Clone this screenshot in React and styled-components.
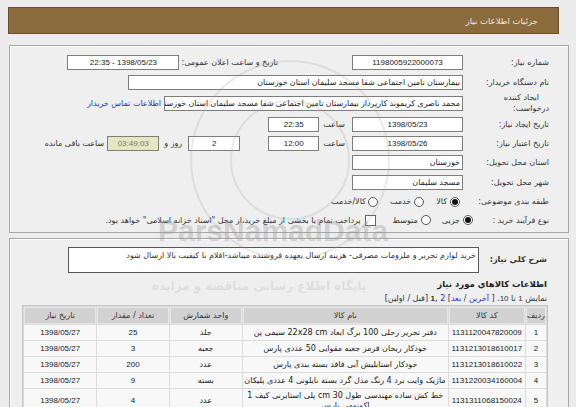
import React from "react";
import styled, { createGlobalStyle } from "styled-components";

const Global = createGlobalStyle`
  html, body { margin: 0; padding: 0; background: #ececec; }
  body { font-family: "Liberation Sans", "DejaVu Sans", sans-serif; font-size: 8px; color: #222; }
  * { box-sizing: border-box; }
`;

const Page = styled.div`
  direction: rtl;
  width: 576px;
  height: 407px;
  overflow: hidden;
  position: relative;
  padding-top: 7px;
`;

const HeaderBar = styled.div`
  margin: 0 17px 0 8px;
  height: 27px;
  background: #8b6b3e;
  border: 1px solid #6a5029;
  display: flex;
  align-items: center;
  padding-right: 20px;
  color: #f3ead8;
  font-family: "DejaVu Sans", sans-serif;
  font-size: 8.5px;
`;

const Panel = styled.div`
  margin: ${(p) => p.$top}px 7px 0 9px;
  border: 1px solid #a8a8a8;
  box-shadow: inset 1px 1px 0 #fff;
  background: #efefef;
  padding: ${(p) => p.$pad};
`;

const Row = styled.div`
  display: flex;
  align-items: center;
  height: ${(p) => p.$h || 20}px;
`;

const Label = styled.div`
  width: ${(p) => p.$w || 79}px;
  flex: none;
  font-family: "DejaVu Sans", sans-serif;
  font-size: 8px;
  color: #333;
  line-height: 11px;
  font-weight: ${(p) => (p.$bold ? "bold" : "normal")};
`;

const LabelLine = styled.div`
  padding-right: ${(p) => p.$pr || 0}px;
`;

const Text = styled.span`
  font-family: "DejaVu Sans", sans-serif;
  font-size: 8px;
  color: #333;
  margin-right: ${(p) => p.$mr || 0}px;
  white-space: nowrap;
`;

const Field = styled.div`
  flex: none;
  width: ${(p) => p.$w}px;
  height: 15px;
  margin-right: ${(p) => p.$mr || 0}px;
  background: ${(p) => (p.$yellow ? "#e6e6c2" : "#fff")};
  border: 1px solid #7d7d7d;
  color: ${(p) => (p.$yellow ? "#777" : "#222")};
  display: flex;
  align-items: center;
  justify-content: ${(p) => (p.$start ? "flex-start" : "center")};
  padding: 0 2px;
  font-family: "Liberation Sans", "DejaVu Sans", sans-serif;
  font-size: 8px;
  white-space: nowrap;
  overflow: hidden;
`;

const Link = styled.a`
  color: #2e2eb8;
  text-decoration: none;
  font-family: "DejaVu Sans", sans-serif;
  font-size: 8px;
  margin-right: ${(p) => p.$mr || 0}px;
  white-space: nowrap;
`;

const Radio = styled.span`
  width: 10px;
  height: 10px;
  border-radius: 50%;
  border: 1px solid #555;
  background: #fff;
  display: inline-flex;
  align-items: center;
  justify-content: center;
  flex: none;
  margin-right: ${(p) => p.$mr || 0}px;
  &::after {
    content: "";
    width: 6px;
    height: 6px;
    border-radius: 50%;
    background: ${(p) => (p.$on ? "#111" : "transparent")};
  }
`;

const Check = styled.span`
  width: 11px;
  height: 11px;
  border: 1px solid #666;
  background: #fff;
  flex: none;
  margin-right: ${(p) => p.$mr || 0}px;
`;

const DescBox = styled.div`
  width: 411px;
  height: 26px;
  margin-right: 2px;
  background: #fff;
  border: 1px solid #555;
  padding: 3px 2px;
  font-family: "DejaVu Sans", sans-serif;
  font-size: 8px;
  color: #333;
  white-space: nowrap;
  overflow: hidden;
`;

const SectionTitle = styled.div`
  font-family: "DejaVu Sans", sans-serif;
  font-weight: bold;
  font-size: 8.5px;
  color: #222;
  height: ${(p) => p.$h}px;
  display: flex;
  align-items: center;
`;

const Pager = styled.div`
  font-family: "DejaVu Sans", sans-serif;
  font-size: 8px;
  color: #333;
  height: 11px;
  line-height: 10px;
  white-space: pre;
`;

const Num = styled.span`
  font-family: "Liberation Sans", sans-serif;
  font-weight: ${(p) => (p.$bold ? "bold" : "normal")};
`;

const Table = styled.table`
  border-collapse: separate;
  border-spacing: 1px;
  background: #dcdcdc;
  border: 1px solid #c4c4c4;
  margin-right: -1px;
  width: 526px;
  table-layout: fixed;
`;

const Th = styled.th`
  background: #d2d2d2;
  height: 17px;
  font-weight: normal;
  font-family: "DejaVu Sans", sans-serif;
  font-size: 8px;
  color: #333;
  text-align: center;
  padding: 0;
  border: 1px solid #e6e6e6;
`;

const Td = styled.td`
  background: #f8f8f8;
  height: ${(p) => p.$h || 15}px;
  font-family: ${(p) =>
    p.$fa ? '"DejaVu Sans", sans-serif' : '"Liberation Sans", "DejaVu Sans", sans-serif'};
  font-size: 8px;
  color: #222;
  text-align: center;
  padding: 0 2px;
  white-space: nowrap;
  overflow: hidden;
  line-height: 10px;
`;

const Watermark = styled.div`
  position: absolute;
  inset: 0;
  pointer-events: none;
`;

const WmText = styled.div`
  position: absolute;
  left: ${(p) => p.$x}px;
  top: ${(p) => p.$y}px;
  font-family: ${(p) => p.$font || '"Liberation Sans", sans-serif'};
  font-weight: bold;
  font-size: ${(p) => p.$size}px;
  color: rgba(150, 150, 150, ${(p) => p.$a});
  white-space: nowrap;
  direction: ltr;
`;

const WmCircle = styled.div`
  position: absolute;
  left: ${(p) => p.$x}px;
  top: ${(p) => p.$y}px;
  width: ${(p) => p.$d}px;
  height: ${(p) => p.$d}px;
  border-radius: 50%;
  border: 2px solid rgba(160, 160, 160, 0.22);
`;

const rows = [
  ["1", "1131120047820009", "دفتر تحریر رحلی 100 برگ ابعاد 22x28 cm سیمی پن", "جلد", "25", "1398/05/27"],
  ["2", "1131213018610017", "خودکار ریحان قرمز جعبه مقوایی 50 عددی پارس", "جعبه", "3", "1398/05/27"],
  ["3", "1131213018610022", "خودکار استابلیش آبی فاقد بسته بندی پارس", "عدد", "200", "1398/05/27"],
  ["4", "1131220034160004", "ماژیک وایت برد 4 رنگ مدل گرد بسته نایلونی 4 عددی پلیکان", "بسته", "9", "1398/05/27"],
];

export default function App() {
  return (
    <>
      <Global />
      <Page>
        <HeaderBar>جزئیات اطلاعات نیاز</HeaderBar>

        <Panel $top={11} $pad="6px 19px 3px 0">
          <Row>
            <Label>شماره نیاز:</Label>
            <Field $w={111} $mr={7}>1198005922000073</Field>
            <Text $mr={74}>تاریخ و ساعت اعلان عمومی:</Text>
            <Field $w={112} $mr={2}>1398/05/23 - 22:35</Field>
          </Row>
          <Row>
            <Label>نام دستگاه خریدار:</Label>
            <Field $w={335} $mr={7} $start>بیمارستان تامین اجتماعی شفا مسجد سلیمان استان خوزستان</Field>
          </Row>
          <Row $h={22}>
            <Label>
              <LabelLine $pr={10}>ایجاد کننده</LabelLine>
              <LabelLine>درخواست:</LabelLine>
            </Label>
            <Field $w={299} $mr={7} $start>محمد ناصری کریموند کارپرداز بیمارستان تامین اجتماعی شفا مسجد سلیمان استان خوزستان</Field>
            <Link $mr={3}>اطلاعات تماس خریدار</Link>
          </Row>
          <Row>
            <Label>تاریخ ایجاد نیاز:</Label>
            <Field $w={111} $mr={7}>1398/05/23</Field>
            <Text $mr={7}>ساعت</Text>
            <Field $w={51} $mr={4}>22:35</Field>
          </Row>
          <Row $h={19}>
            <Label>تاریخ اعتبار نیاز:</Label>
            <Field $w={111} $mr={7}>1398/05/26</Field>
            <Text $mr={7}>ساعت</Text>
            <Field $w={51} $mr={4}>12:00</Field>
            <Field $w={52} $mr={28}>2</Field>
            <Text $mr={6}>روز و</Text>
            <Field $w={52} $mr={5} $yellow>03:49:03</Field>
            <Text $mr={3}>ساعت باقی مانده</Text>
          </Row>
          <Row $h={19}>
            <Label>استان محل تحویل:</Label>
            <Field $w={111} $mr={7} $start>خوزستان</Field>
          </Row>
          <Row>
            <Label>شهر محل تحویل:</Label>
            <Field $w={111} $mr={7} $start>مسجد سلیمان</Field>
          </Row>
          <Row $h={19}>
            <Label>طبقه بندی موضوعی:</Label>
            <Radio $on $mr={10} />
            <Text $mr={3}>کالا</Text>
            <Radio $mr={12} />
            <Text $mr={3}>خدمت</Text>
            <Radio $mr={12} />
            <Text $mr={2}>کالا/خدمت</Text>
          </Row>
          <Row $h={18}>
            <Label>نوع فرآیند خرید :</Label>
            <Radio $on $mr={-3} />
            <Text $mr={3}>جزیی</Text>
            <Radio $mr={11} />
            <Text $mr={3}>متوسط</Text>
            <Check $mr={17} />
            <Text $mr={4}>پرداخت تمام یا بخشی از مبلغ خرید،از محل "اسناد خزانه اسلامی" خواهد بود.</Text>
          </Row>
        </Panel>

        <Panel $top={5} $pad="7px 21px 0 0">
          <Row $h={27}>
            <Label $bold $w={66}>شرح کلي نياز:</Label>
            <DescBox>خرید لوازم تحریر و ملزومات مصرفی- هزینه ارسال بعهده فروشنده میباشد-اقلام با کیفیت بالا ارسال شود</DescBox>
          </Row>
          <SectionTitle $h={21}>اطلاعات کالاهاي مورد نياز</SectionTitle>
          <Pager>
            نمايش <Num>1</Num> تا <Num>10</Num>. [ <Link>آخرين</Link> / <Link>بعد</Link>] <Link>2</Link> ,<Num $bold>1</Num> [قبل / اولين]
          </Pager>
          <Table>
            <colgroup>
              <col style={{ width: 20 }} />
              <col style={{ width: 76 }} />
              <col style={{ width: 204 }} />
              <col style={{ width: 72 }} />
              <col style={{ width: 71 }} />
              <col style={{ width: 72 }} />
            </colgroup>
            <thead>
              <tr>
                <Th>ردیف</Th>
                <Th>کد کالا</Th>
                <Th>نام کالا</Th>
                <Th>واحد شمارش</Th>
                <Th>تعداد / مقدار</Th>
                <Th>تاریخ نیاز</Th>
              </tr>
            </thead>
            <tbody>
              {rows.map((r) => (
                <tr key={r[0]}>
                  {r.map((c, i) => (
                    <Td key={i} $fa={i === 2 || i === 3}>{c}</Td>
                  ))}
                </tr>
              ))}
              <tr>
                <Td>5</Td>
                <Td>1131311068150024</Td>
                <Td $fa $h={24}>
                  <div>خط کش ساده مهندسی طول 30 cm پلی استایرنی کیف 1</div>
                  <div>اکونومی پارس</div>
                </Td>
                <Td $fa>عدد</Td>
                <Td>4</Td>
                <Td>1398/05/27</Td>
              </tr>
            </tbody>
          </Table>
        </Panel>

        <Watermark>
          <WmCircle $x={190} $y={60} $d={200} />
          <WmCircle $x={230} $y={100} $d={120} />
          <WmText $x={158} $y={214} $size={30} $a={0.35}>ParsNamadData</WmText>
          <WmText $x={152} $y={279} $size={12} $a={0.2} $font='"DejaVu Sans", sans-serif'>پایگاه اطلاع رسانی مناقصه و مزایده</WmText>
        </Watermark>
      </Page>
    </>
  );
}
